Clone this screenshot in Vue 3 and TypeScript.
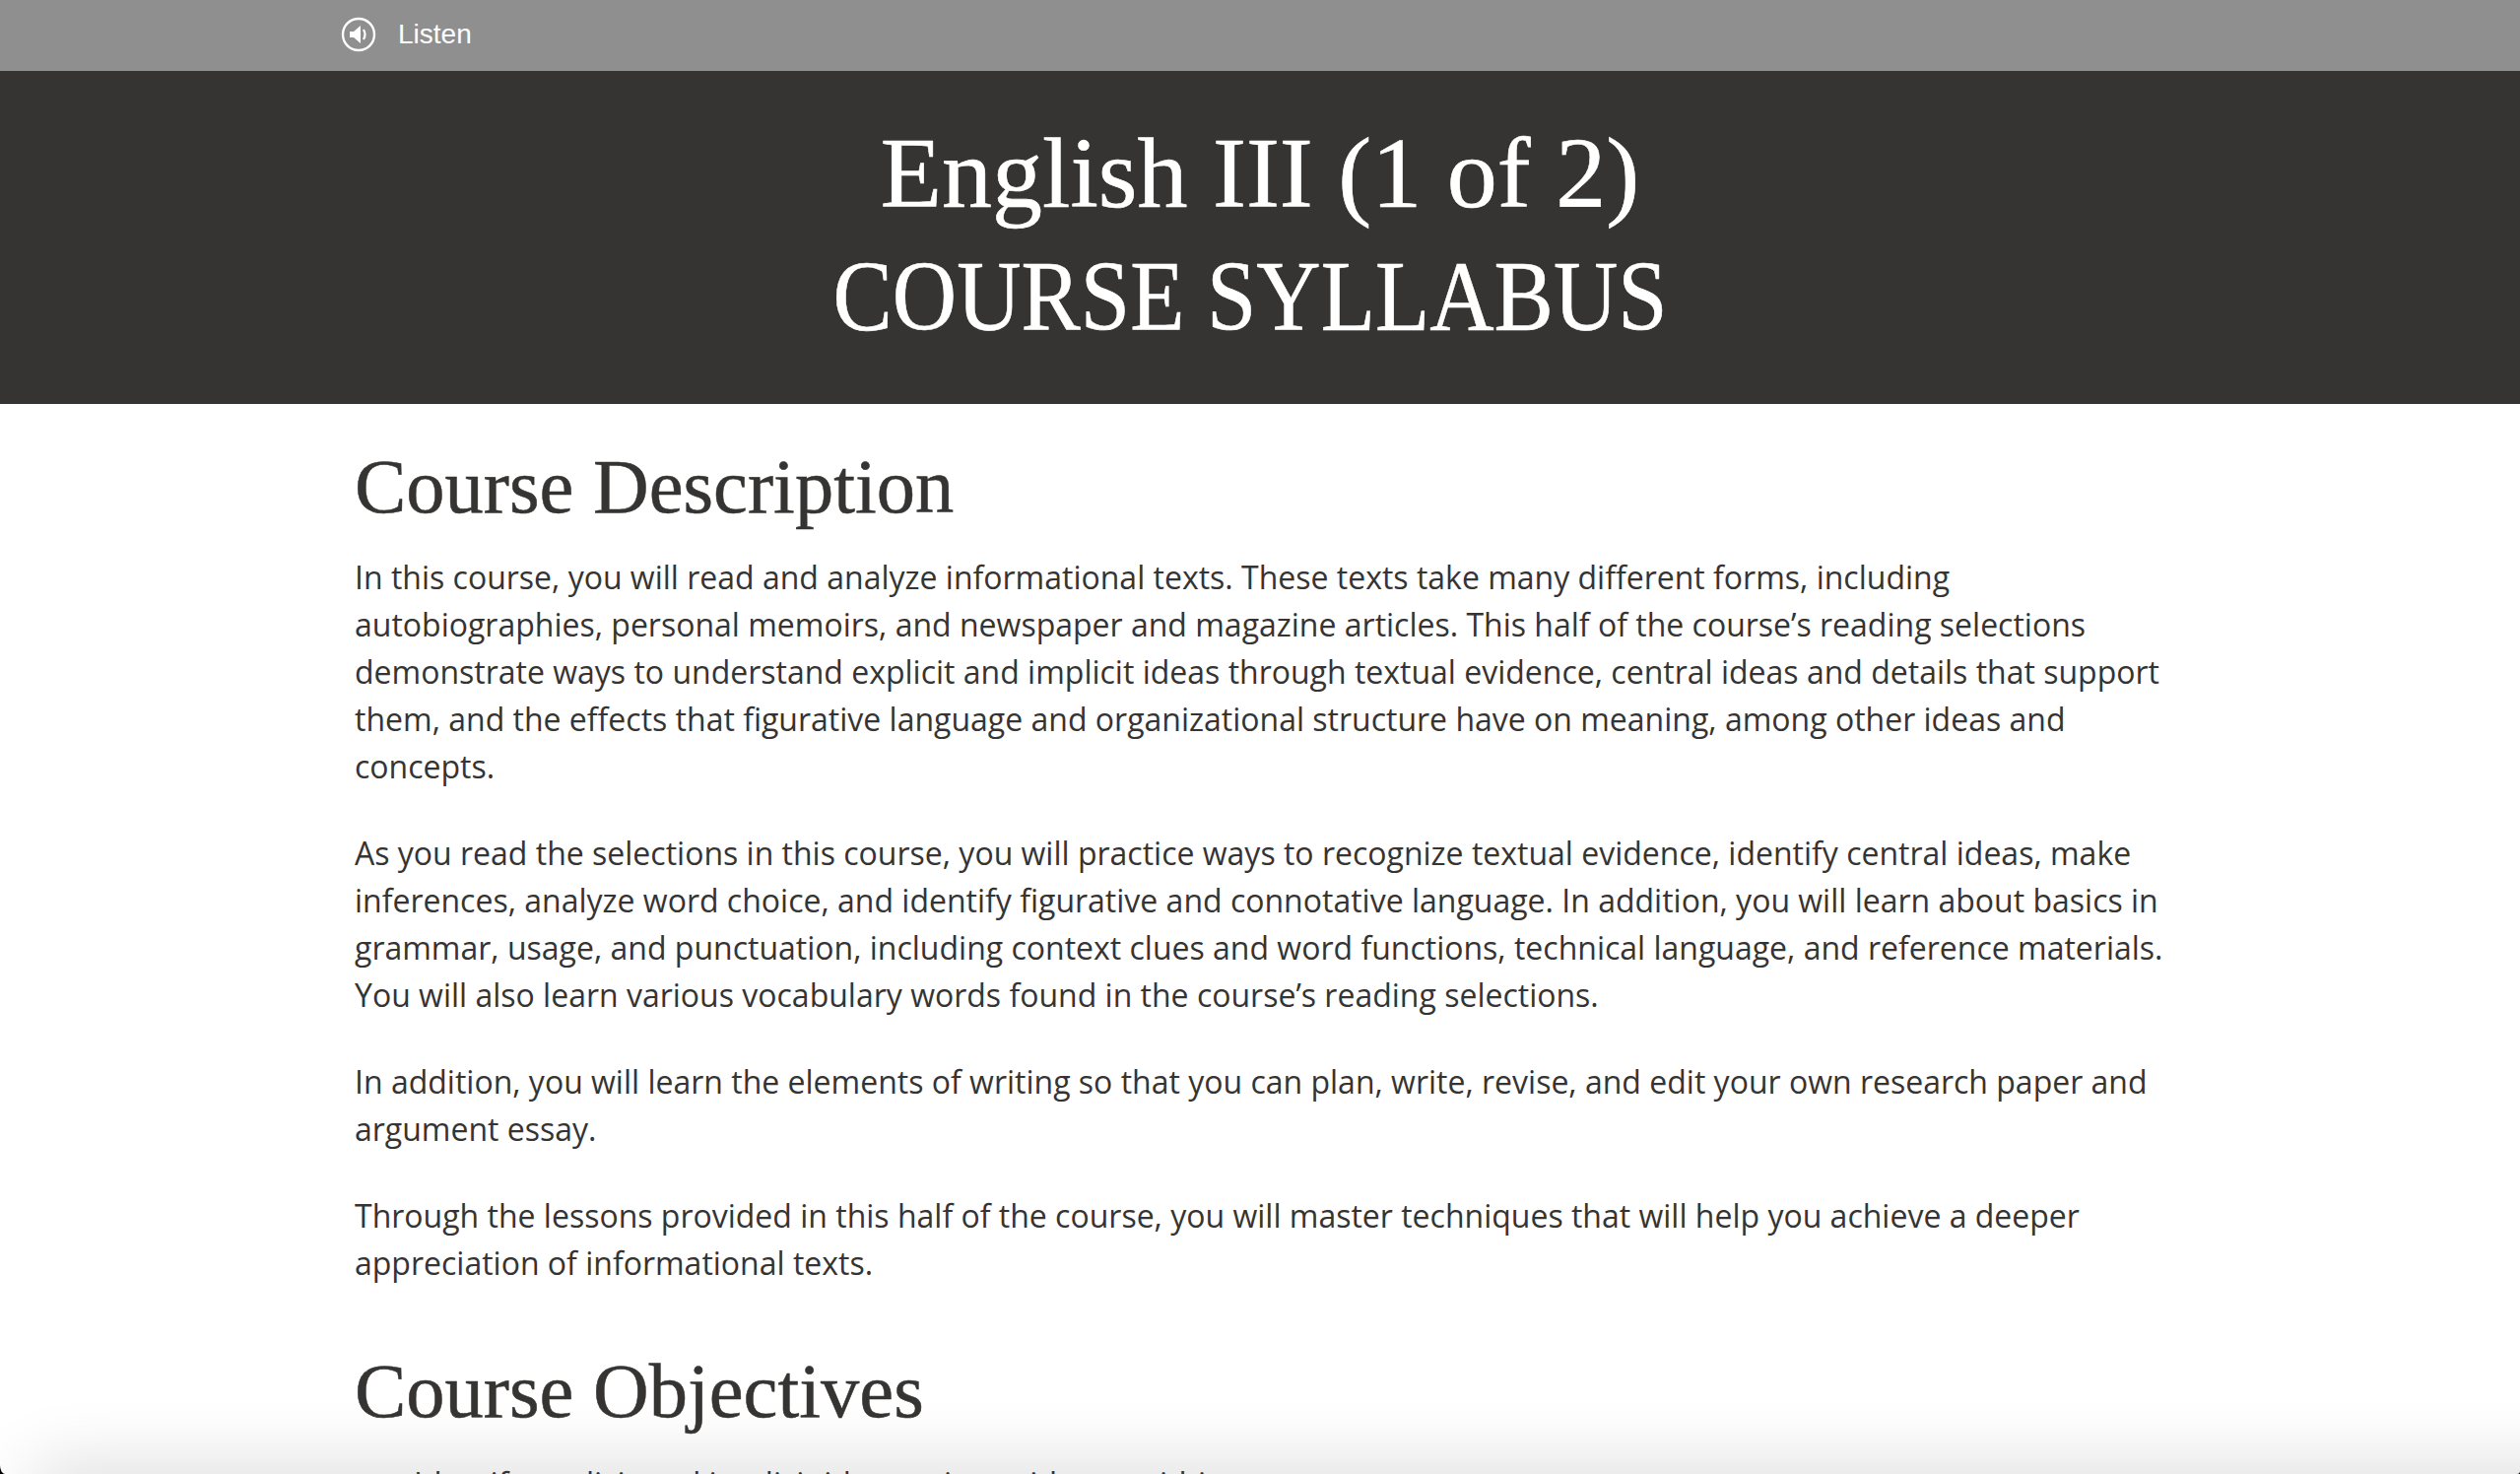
<script setup lang="ts">
const paragraphs: string[] = [
  'In this course, you will read and analyze informational texts. These texts take many different forms, including autobiographies, personal memoirs, and newspaper and magazine articles. This half of the course’s reading selections demonstrate ways to understand explicit and implicit ideas through textual evidence, central ideas and details that support them, and the effects that figurative language and organizational structure have on meaning, among other ideas and concepts.',
  'As you read the selections in this course, you will practice ways to recognize textual evidence, identify central ideas, make inferences, analyze word choice, and identify figurative and connotative language. In addition, you will learn about basics in grammar, usage, and punctuation, including context clues and word functions, technical language, and reference materials. You will also learn various vocabulary words found in the course’s reading selections.',
  'In addition, you will learn the elements of writing so that you can plan, write, revise, and edit your own research paper and argument essay.',
  'Through the lessons provided in this half of the course, you will master techniques that will help you achieve a deeper appreciation of informational texts.'
]
</script>

<template>
  <div class="frame">
    <div class="page">
      <div class="listen-bar">
        <svg class="listen-icon" viewBox="0 0 36 36" width="36" height="36">
          <circle cx="18" cy="18" r="16" fill="none" stroke="#fff" stroke-width="2.400" />
          <path d="M9 15h4l7-6v18l-7-6H9z" fill="#fff" />
          <path d="M23 13c1.800 3 1.800 7 0 10" fill="none" stroke="#fff" stroke-width="2.200" />
        </svg>
        <span class="listen-label">Listen</span>
      </div>
      <header class="banner">
        <h1><span class="line">English III (1 of 2)</span><span class="line caps">COURSE SYLLABUS</span></h1>
      </header>
      <main class="content">
        <h2>Course Description</h2>
        <p v-for="(text, i) in paragraphs" :key="i">{{ text }}</p>
        <h2 class="objectives">Course Objectives</h2>
        <ul>
          <li>Identify explicit and implicit ideas using evidence within a text</li>
        </ul>
      </main>
      <div class="bottom-shadow"></div>
    </div>
  </div>
</template>

<style scoped>
.frame {
  height: 1496px;
  background: #000;
}

.page {
  position: relative;
  height: 1496px;
  overflow: hidden;
  background: #fff;
  color: #353432;
  border-radius: 0 0 3px 5px / 0 0 3px 9px;
}

.listen-bar {
  height: 72px;
  background: #8f8f8f;
  display: flex;
  align-items: center;
  padding-left: 346px;
  padding-bottom: 2px;
  gap: 22px;
  box-sizing: border-box;
}

.listen-label {
  font-family: "Liberation Sans", Arial, sans-serif;
  font-size: 28px;
  color: #fff;
}

.banner {
  height: 338px;
  background: #353432;
  box-sizing: border-box;
  padding-top: 41px;
}

h1 {
  margin: 0;
  text-align: center;
  font-family: "Liberation Serif", serif;
  font-weight: 400;
  font-size: 102px;
  line-height: 125px;
  color: #fff;
  -webkit-text-stroke: 0.6px #fff;
}

.line {
  display: block;
}

.caps {
  transform: translateX(-10px) scaleX(0.887);
}

.content {
  padding: 0 360px;
  position: relative;
  z-index: 1;
}

h2 {
  margin: 0;
  padding-top: 40px;
  font-family: "Liberation Serif", serif;
  font-weight: 400;
  font-size: 78.500px;
  line-height: 88px;
  color: #353432;
  -webkit-text-stroke: 0.5px #353432;
}

p {
  margin: 24px 0 40px;
  font-family: "Open Sans", sans-serif;
  font-size: 32px;
  line-height: 48px;
  color: #353432;
}

.objectives {
  padding-top: 22px;
}

ul {
  margin: 26px 0 0;
  padding-left: 60px;
  font-family: "Open Sans", sans-serif;
  font-size: 32px;
  line-height: 48px;
}

.bottom-shadow {
  position: absolute;
  left: 40px;
  right: -120px;
  top: 1496px;
  height: 40px;
  box-shadow: 0 0 70px 6px rgba(0, 0, 0, 0.16);
}
</style>
